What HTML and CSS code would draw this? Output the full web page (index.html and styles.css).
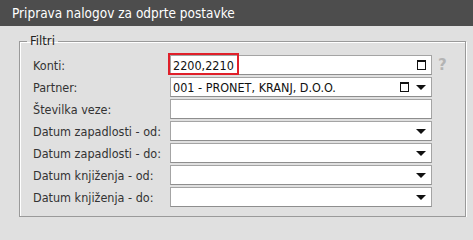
FILE: index.html
```html
<!DOCTYPE html>
<html>
<head>
<meta charset="utf-8">
<link rel="stylesheet" href="styles.css">
</head>
<body>
<div class="header">Priprava nalogov za odprte postavke</div>
<div class="content">
  <fieldset class="filters">
    <legend>Filtri</legend>
    <div class="row">
      <label class="lbl">Konti:</label>
      <div class="field">
        <span class="val">2200,2210</span>
        <span class="icons"><span class="sq"></span></span>
        <span class="highlight"></span>
      </div>
      <span class="help">?</span>
    </div>
    <div class="row">
      <label class="lbl">Partner:</label>
      <div class="field">
        <span class="val">001 - PRONET, KRANJ, D.O.O.</span>
        <span class="icons"><span class="sq"></span><span class="arrow"></span></span>
      </div>
    </div>
    <div class="row">
      <label class="lbl">Številka veze:</label>
      <div class="field"></div>
    </div>
    <div class="row">
      <label class="lbl">Datum zapadlosti - od:</label>
      <div class="field"><span class="val"></span><span class="icons"><span class="arrow"></span></span></div>
    </div>
    <div class="row">
      <label class="lbl">Datum zapadlosti - do:</label>
      <div class="field"><span class="val"></span><span class="icons"><span class="arrow"></span></span></div>
    </div>
    <div class="row">
      <label class="lbl">Datum knjiženja - od:</label>
      <div class="field"><span class="val"></span><span class="icons"><span class="arrow"></span></span></div>
    </div>
    <div class="row">
      <label class="lbl">Datum knjiženja - do:</label>
      <div class="field"><span class="val"></span><span class="icons"><span class="arrow"></span></span></div>
    </div>
  </fieldset>
</div>
</body>
</html>
```
FILE: styles.css
```css
html, body {
  margin: 0;
  padding: 0;
  background: #e0e0e0;
  font-family: "DejaVu Sans Condensed", "DejaVu Sans", sans-serif;
  color: #222;
}
.header {
  height: 26px;
  background: #4d4d4d;
  color: #fff;
  font-size: 13.5px;
  line-height: 26px;
  padding-left: 12px;
  box-sizing: border-box;
}
.content {
  padding: 7px 7px 0 19px;
}
.filters {
  margin: 0;
  padding: 6px 0 9px 13px;
  border: 1px solid #9a9a9a;
  box-shadow: inset 1px 1px 0 #fff, 1px 1px 0 #fff;
}
.filters legend {
  font-size: 13px;
  line-height: 16px;
  padding: 0 3px;
  margin-left: -6px;
  color: #222;
}
.row {
  display: flex;
  align-items: center;
  height: 20px;
  margin-bottom: 2px;
}
.row:last-child {
  margin-bottom: 0;
}
.lbl {
  width: 137px;
  font-size: 12.5px;
  color: #333;
}
.field {
  position: relative;
  width: 262px;
  height: 20px;
  box-sizing: border-box;
  background: #fff;
  border: 1px solid #a4a4a4;
  border-bottom-color: #8e8e8e;
  display: flex;
  align-items: center;
  padding-left: 2px;
  font-size: 12.5px;
  color: #111;
}
.val {
  flex: 1;
  white-space: nowrap;
}
.icons {
  display: flex;
  align-items: center;
  gap: 7px;
  padding-right: 5px;
}
.sq {
  width: 7px;
  height: 7px;
  border: 1.5px solid #111;
  border-top-width: 2px;
}
.arrow {
  width: 0;
  height: 0;
  border-left: 5px solid transparent;
  border-right: 5px solid transparent;
  border-top: 5px solid #111;
}
.highlight {
  position: absolute;
  left: -3px;
  top: -3px;
  width: 71px;
  height: 22px;
  border: 2px solid #e0202a;
  box-sizing: border-box;
}
.help {
  margin-left: 6px;
  font-size: 15px;
  font-weight: bold;
  color: #b4b4b4;
  font-family: "DejaVu Sans", sans-serif;
}
```
